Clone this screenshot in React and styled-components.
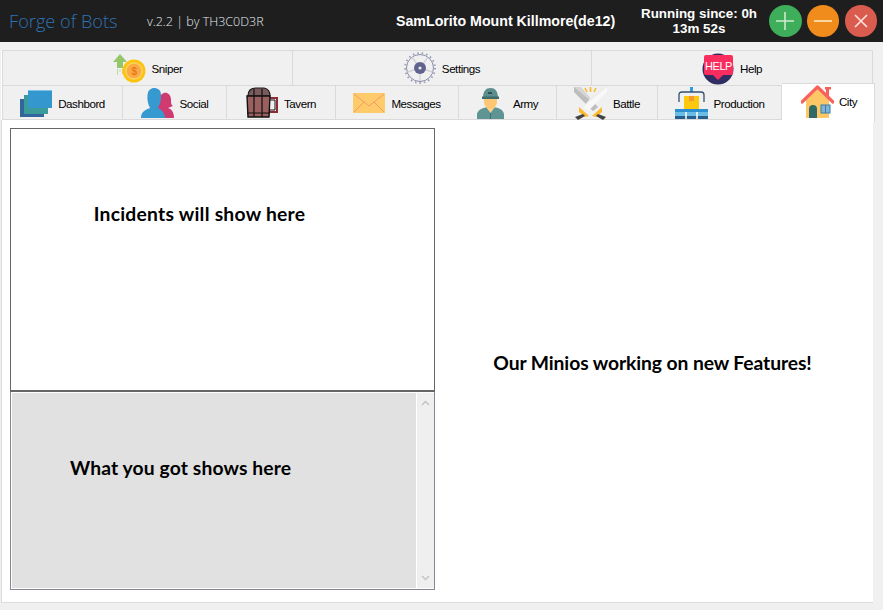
import React from "react"
import styled, { createGlobalStyle } from "styled-components"

const GlobalStyle = createGlobalStyle`
  html, body { margin: 0; padding: 0; background: #f0f0f0; }
  body { font-family: "Liberation Sans", Arial, sans-serif; }
`

const Page = styled.div`
  width: 883px;
  height: 610px;
  overflow: hidden;
  display: flex;
  flex-direction: column;
  background: #f0f0f0;
`

const TopBar = styled.header`
  height: 42px;
  flex: none;
  display: flex;
  align-items: center;
  background: #1e1e1e;
  color: #fff;
`
const Brand = styled.div`
  width: 147px;
  padding-left: 9px;
  box-sizing: border-box;
  font: 300 18.2px "Open Sans", sans-serif;
  color: #2f72b2;
  white-space: nowrap;
`
const Version = styled.div`
  width: 249px;
  font: 300 12.5px "Open Sans", sans-serif;
  color: #e2e8ee;
  white-space: nowrap;
`
const Account = styled.div`
  width: 243px;
  font-weight: 700;
  font-size: 14.2px;
  white-space: nowrap;
`
const Uptime = styled.div`
  width: 120px;
  text-align: center;
  font-weight: 700;
  font-size: 13.4px;
  line-height: 15px;
`
const WindowButtons = styled.div`
  display: flex;
  gap: 5px;
  margin-left: 10px;
`
const RoundButton = styled.button`
  width: 32.5px;
  height: 32px;
  padding: 0;
  margin-right: 0.3px;
  border: 0;
  border-radius: 50%;
  background: ${p => p.$color};
  display: flex;
  align-items: center;
  justify-content: center;
`

const Frame = styled.main`
  margin: 8px 10px 0 1px;
  height: 552px;
  display: flex;
  flex-direction: column;
  background: #fff;
  border-bottom: 1px solid #dcdcdc;
`
const TabRow = styled.div`
  display: flex;
  height: ${p => p.$height}px;
  margin-left: 1px;
  flex: none;
  background: #f0f0f0;
`
const Tab = styled.div`
  width: ${p => p.$width}px;
  box-sizing: border-box;
  display: flex;
  align-items: center;
  justify-content: center;
  gap: ${p => p.$gap || 6}px;
  padding-top: ${p => (p.$top ? 0 : 1)}px;
  font-size: 11.6px;
  letter-spacing: -0.45px;
  color: #000;
  border: 1px solid #dadada;
  border-left-width: ${p => (p.$first ? 1 : 0)}px;
  border-bottom-width: ${p => (p.$top ? 0 : 1)}px;
`
const ActiveTab = styled(Tab)`
  height: 39px;
  margin-top: -2px;
  margin-right: -2px;
  padding: 0 0 4px 2px;
  background: #fff;
  border-bottom: 0;
  position: relative;
`

const Content = styled.div`
  flex: 1;
  display: flex;
  padding: 8px 0 12px 8px;
  border-left: 1px solid #dcdcdc;
`
const LeftColumn = styled.div`
  width: 425px;
  display: flex;
  flex-direction: column;
`
const Label = styled.span`
  font-family: Lato, sans-serif;
  font-weight: 700;
  font-size: 19.3px;
  letter-spacing: ${p => p.$spacing || 0}px;
  color: #000;
  white-space: nowrap;
`
const IncidentsBox = styled.section`
  height: 264px;
  flex: none;
  box-sizing: border-box;
  border: 1px solid #666;
  border-bottom-width: 2px;
  display: flex;
  align-items: center;
  justify-content: center;
  padding: 0 46px 93px 0;
`
const LootBox = styled.section`
  flex: 1;
  box-sizing: border-box;
  border: 1px solid #828790;
  border-top: 0;
  padding: 1px;
  display: flex;
  background: #fff;
`
const LootList = styled.div`
  flex: 1;
  background: #e1e1e1;
  display: flex;
  align-items: center;
  padding: 0 0 46px 58px;
`
const ScrollBar = styled.div`
  width: 17px;
  flex: none;
  box-sizing: border-box;
  margin-left: 1px;
  margin-right: -1px;
  background: #efefef;
  display: flex;
  flex-direction: column;
  justify-content: space-between;
  align-items: center;
  padding: 7px 0;
`
const Notice = styled.section`
  flex: 1;
  display: flex;
  align-items: center;
  justify-content: center;
  padding: 6px 3px 0 0;
`

const Chevron = ({ up }) => (
  <svg width="9" height="6" viewBox="0 0 9 6">
    <path d={up ? "M1 5 L4.5 1.5 L8 5" : "M1 1 L4.5 4.5 L8 1"} fill="none" stroke="#c4c4c4" strokeWidth="1.5" />
  </svg>
)

const SniperIcon = () => (
  <svg width="34" height="30" viewBox="0 0 34 30">
    <path d="M0 9 L7 1 L14 9 H10 V15 H4 V9 Z" fill="#95c76a" />
    <path d="M4.5 16 V22 M7 16 V19 M9.5 16 V21" stroke="#bedb9f" strokeWidth="1" />
    <circle cx="21" cy="18" r="11.5" fill="#fdc30f" />
    <circle cx="21" cy="18" r="8" fill="#fca847" stroke="#fbd25e" strokeWidth="1.5" />
    <text x="21" y="22" textAnchor="middle" fontSize="10" fontWeight="700" fill="#e57d12" fontFamily="Liberation Sans">$</text>
  </svg>
)

const GearIcon = () => {
  const spokes = [0, 72, 144, 216, 288]
  return (
    <svg width="32" height="32" viewBox="0 0 32 32">
      <circle cx="16" cy="16" r="13.5" fill="none" stroke="#8b8dab" strokeWidth="1" />
      <circle cx="16" cy="16" r="15" fill="none" stroke="#9a9bb4" strokeWidth="1.8" strokeDasharray="1.5 3" />
      {spokes.map(a => (
        <path key={a} d="M16 16 V3" stroke="#d2d2da" strokeWidth="1.4" transform={`rotate(${a + 180} 16 16)`} />
      ))}
      <circle cx="16" cy="16" r="6" fill="#62628f" />
      <circle cx="16" cy="16" r="1.6" fill="#e8e8f0" />
    </svg>
  )
}

const HelpIcon = () => (
  <svg width="32" height="33" viewBox="0 0 32 33">
    <circle cx="16" cy="17" r="15.5" fill="#2f2d62" />
    <path d="M2 5 Q2 3 4 3 H29 Q31 3 31 5 V21 Q31 23 29 23 H21 L16 28 L11 23 H4 Q2 23 2 21 Z" fill="#fb2d5e" />
    <text x="16.5" y="18" textAnchor="middle" fontSize="11" fill="#fff" fontFamily="Liberation Sans">HELP</text>
  </svg>
)

const DashboardIcon = () => (
  <svg width="32" height="27" viewBox="0 0 32 27">
    <rect x="0" y="9" width="24" height="18" fill="#33659d" />
    <rect x="4" y="5" width="24" height="19" fill="#3b9b9b" />
    <rect x="8" y="0" width="24" height="18" fill="#3498cf" />
    <rect x="8" y="0" width="24" height="1" fill="#7fc1e6" />
  </svg>
)

const SocialIcon = () => (
  <svg width="33" height="30" viewBox="0 0 33 30">
    <path d="M17 13 C20 2 29 3 30 11 C30 15 30 17 32 18 L27 20 C31 21 33 25 33 30 H15 Z" fill="#cf3a6f" />
    <path d="M0 30 C0 24 4 22 9 20 C7 16 6 12 6.5 7 C7 2 10 0 13 0 C17 0 20 2 20 7 C20.5 12 19 16 17 20 C21 22 24 25 24 30 Z" fill="#3699d0" />
  </svg>
)

const TavernIcon = () => (
  <svg width="32" height="32" viewBox="0 0 32 32">
    <path d="M22 11 H31 V25 H22" fill="none" stroke="#8c2c36" strokeWidth="2" />
    <path d="M23 13 H29 V23 H23" fill="none" stroke="#111" strokeWidth="1" />
    <path d="M2 9 Q2 1 10 1 H18 Q24 2 24 9 Z" fill="#7a5a5a" stroke="#1a1a1a" strokeWidth="1.2" />
    <path d="M1 9 H24 L23 30 H2 Z" fill="#99605f" stroke="#111" strokeWidth="1.4" />
    <path d="M8 2 V30 M16 2 V30 M1 26 H24" stroke="#111" strokeWidth="1.2" />
  </svg>
)

const MailIcon = () => (
  <svg width="32" height="20" viewBox="0 0 32 20">
    <rect width="32" height="20" fill="#fecb6b" />
    <path d="M1 1 L16 13 L31 1 M1 19 L11 9 M31 19 L21 9" fill="none" stroke="#f7986b" strokeWidth="1" />
  </svg>
)

const ArmyIcon = () => (
  <svg width="27" height="31" viewBox="0 0 27 31">
    <path d="M0 31 V26 C1 21 7 20 10 19 H17 C21 20 26 21 27 26 V31 Z" fill="#5e9594" />
    <path d="M9 19 H18 L13.5 25 Z" fill="#fcd08a" />
    <path d="M7 10 H20 V14 C20 18 16 21 13.5 21 C11 21 7 18 7 14 Z" fill="#fdc672" />
    <path d="M6 10 C6 3 9 0 13.5 0 C18 0 21 3 21 10 Z" fill="#5b8f8e" />
    <rect x="5" y="8.5" width="17" height="2.5" fill="#3d6d6c" />
    <rect x="11" y="4" width="4" height="2" fill="#2f5150" />
    <path d="M13.5 25 V31" stroke="#3d6d6c" strokeWidth="1" />
  </svg>
)

const BattleIcon = () => (
  <svg width="33" height="33" viewBox="0 0 33 33">
    <path d="M0 0 L7 0 L24 20 L19 24 L0 5 Z" fill="#d5d5d5" />
    <path d="M0 0 L24 20 L19 24 L0 5 Z" fill="#bdbdbd" />
    <path d="M33 0 L26 0 L9 20 L14 24 L33 5 Z" fill="#ededed" />
    <path d="M33 0 L9 20 L14 24 L33 5 Z" fill="#f8f8f8" />
    <path d="M5 20 L15 29 L11 30 L5 25 Z" fill="#fdb92c" />
    <path d="M28 20 L18 29 L22 30 L28 25 Z" fill="#fdb92c" />
    <path d="M9 27 L1 30 L4 33 L11 29 Z" fill="#444" />
    <path d="M24 27 L32 30 L29 33 L22 29 Z" fill="#444" />
    <path d="M16.5 0 V5 M11 1 L13 5 M22 1 L20 5" stroke="#fdb92c" strokeWidth="1.6" />
  </svg>
)

const ProductionIcon = () => (
  <svg width="33" height="32" viewBox="0 0 33 32">
    <rect x="15" y="0" width="3" height="5" fill="#2d9fd8" />
    <path d="M4 15 V8 Q4 5 7 5 H26 Q29 5 29 8 V15" fill="none" stroke="#34506e" strokeWidth="1.3" />
    <rect x="9" y="9" width="15" height="13" fill="#fdc90f" />
    <rect x="14" y="9" width="5" height="5" fill="#f29a2e" />
    <rect x="0" y="22" width="33" height="3" fill="#2c8fd1" />
    <rect x="0" y="25" width="33" height="4" fill="#6bbde6" />
    <rect x="0" y="29" width="33" height="3" fill="#27608f" />
    <path d="M11 25 V32 M22 25 V32" stroke="#fff" strokeWidth="1.5" />
  </svg>
)

const HouseIcon = () => (
  <svg width="33" height="33" viewBox="0 0 33 33">
    <rect x="25" y="3" width="3" height="8" fill="#f2625a" />
    <rect x="24" y="2" width="6" height="2.5" fill="#f2625a" />
    <path d="M5 15 L16.5 4 L28 15 V33 H5 Z" fill="#fdc766" />
    <path d="M1 17 L16.5 2 L32 17" fill="none" stroke="#f9625c" strokeWidth="3.2" strokeLinecap="round" strokeLinejoin="round" />
    <path d="M8 33 V24 Q8 20 12 20 Q16 20 16 24 V33 Z" fill="#2f6a67" />
    <rect x="20" y="20" width="9" height="8" fill="#7fb4d8" stroke="#3c7ca5" strokeWidth="1" />
    <path d="M24.5 20 V28" stroke="#3c7ca5" strokeWidth="1" />
  </svg>
)

const topTabs = [
  { label: "Sniper", width: 291, Icon: SniperIcon, gap: 5, first: true },
  { label: "Settings", width: 299, Icon: GearIcon, gap: 6 },
  { label: "Help", width: 281, Icon: HelpIcon, gap: 6 },
]

const bottomTabs = [
  { label: "Dashbord", width: 121, Icon: DashboardIcon, first: true },
  { label: "Social", width: 104, Icon: SocialIcon },
  { label: "Tavern", width: 109, Icon: TavernIcon },
  { label: "Messages", width: 123, Icon: MailIcon },
  { label: "Army", width: 98, Icon: ArmyIcon, gap: 9 },
  { label: "Battle", width: 101, Icon: BattleIcon, gap: 6 },
  { label: "Production", width: 124, Icon: ProductionIcon, gap: 6 },
]

export default function App() {
  return (
    <Page>
      <GlobalStyle />
      <TopBar>
        <Brand>Forge of Bots</Brand>
        <Version>v.2.2 | by TH3C0D3R</Version>
        <Account>SamLorito Mount Killmore(de12)</Account>
        <Uptime>
          Running since: 0h
          <br />
          13m 52s
        </Uptime>
        <WindowButtons>
          <RoundButton $color="#3eae5b">
            <svg width="18" height="18" viewBox="0 0 18 18">
              <path d="M9 0 V18 M0 9 H18" stroke="#cdeccd" strokeWidth="1.6" />
            </svg>
          </RoundButton>
          <RoundButton $color="#ef8c1c">
            <svg width="18" height="4" viewBox="0 0 18 4">
              <path d="M0 2 H18" stroke="#fbdfb0" strokeWidth="1.8" />
            </svg>
          </RoundButton>
          <RoundButton $color="#d95c4e">
            <svg width="14" height="14" viewBox="0 0 14 14">
              <path d="M1 1 L13 13 M13 1 L1 13" stroke="#fbe3de" strokeWidth="1.6" />
            </svg>
          </RoundButton>
        </WindowButtons>
      </TopBar>
      <Frame>
        <TabRow $height={35}>
          {topTabs.map(({ label, width, Icon, gap, first }) => (
            <Tab key={label} $width={width} $gap={gap} $first={first} $top>
              <Icon />
              {label}
            </Tab>
          ))}
        </TabRow>
        <TabRow $height={35}>
          {bottomTabs.map(({ label, width, Icon, gap, first }) => (
            <Tab key={label} $width={width} $gap={gap} $first={first}>
              <Icon />
              {label}
            </Tab>
          ))}
          <ActiveTab $width={93} $gap={5}>
            <HouseIcon />
            City
          </ActiveTab>
        </TabRow>
        <Content>
          <LeftColumn>
            <IncidentsBox>
              <Label $spacing={0.25}>Incidents will show here</Label>
            </IncidentsBox>
            <LootBox>
              <LootList>
                <Label $spacing={0.12}>What you got shows here</Label>
              </LootList>
              <ScrollBar>
                <Chevron up />
                <Chevron />
              </ScrollBar>
            </LootBox>
          </LeftColumn>
          <Notice>
            <Label $spacing={-0.09}>Our Minios working on new Features!</Label>
          </Notice>
        </Content>
      </Frame>
    </Page>
  )
}
